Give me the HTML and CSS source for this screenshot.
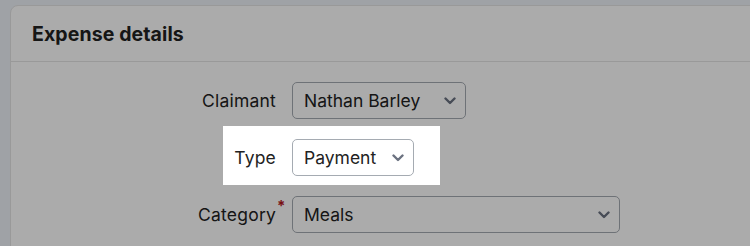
FILE: index.html
```html
<!DOCTYPE html>
<html lang="en">
  <head>
    <meta charset="UTF-8" />
    <meta name="viewport" content="width=device-width, initial-scale=1.0" />
    <title>Expense details</title>
    <link rel="stylesheet" href="styles.css">
  </head>
  <body>
    <div class="card">
      <div class="card-header">Expense details</div>
      <div class="card-body">
        <div class="field">
          <label class="field-label"><span>Claimant</span></label>
          <div class="select select-claimant">
            <span>Nathan Barley</span>
            <svg class="chevron" viewBox="0 0 12 8"><polyline points="1.5,1.5 6,6 10.5,1.5" /></svg>
          </div>
        </div>

        <div class="field">
          <label class="field-label"><span>Type</span></label>
          <div class="select select-type">
            <span>Payment</span>
            <svg class="chevron" viewBox="0 0 12 8"><polyline points="1.5,1.5 6,6 10.5,1.5" /></svg>
          </div>
        </div>

        <div class="field">
          <label class="field-label"><span>Category<sup class="required">*</sup></span></label>
          <div class="select select-category">
            <span>Meals</span>
            <svg class="chevron" viewBox="0 0 12 8"><polyline points="1.5,1.5 6,6 10.5,1.5" /></svg>
          </div>
        </div>
      </div>
    </div>

    <!-- tour highlight over the Type field -->
    <div class="tour-spotlight"></div>
  </body>
</html>
```

FILE: styles.css
```css
* {
  margin: 0;
  padding: 0;
  box-sizing: border-box;
}

body {
  font-family: "Inter", sans-serif;
  background: #edf2f8;
  color: #222;
  padding: 5px 0 0 10px;
  overflow: hidden;
  height: 100vh;
}

.card {
  background: #fff;
  border: 1px solid #e4e4e4;
  border-radius: 8px;
  width: 800px;
  min-height: 300px;
}

.card-header {
  height: 56px;
  padding: 0 21px;
  display: flex;
  align-items: center;
  font-size: 19.5px;
  font-weight: 700;
  letter-spacing: 0.1px;
  border-bottom: 1px solid #e4e4e4;
}

.card-body {
  padding: 20px 0;
  display: flex;
  flex-direction: column;
  gap: 20px;
}

.field {
  display: flex;
  align-items: center;
}

.field-label {
  width: 281px;
  padding-right: 16px;
  text-align: right;
  font-size: 17.5px;
  letter-spacing: 0.2px;
}

.field-label span {
  position: relative;
}

.required {
  position: absolute;
  left: 100%;
  margin-left: 1px;
  top: -8px;
  color: #b5171b;
  font-size: 15px;
  font-weight: 700;
}

.select {
  height: 37px;
  border: 1px solid #a5abb2;
  border-radius: 5px;
  padding: 0 9px 0 11px;
  display: flex;
  align-items: center;
  justify-content: space-between;
  font-size: 17.5px;
  background: #fff;
}

.select-claimant {
  width: 174px;
}

.select-type {
  width: 122px;
}

.select-category {
  width: 328px;
}

.chevron {
  width: 12px;
  height: 8px;
  fill: none;
  stroke: #6b7280;
  stroke-width: 2.4;
  stroke-linecap: round;
  stroke-linejoin: round;
}

.tour-spotlight {
  position: absolute;
  left: 223px;
  top: 126px;
  width: 217px;
  height: 59px;
  box-shadow: 0 0 0 2000px rgba(0, 0, 0, 0.33);
}
```
